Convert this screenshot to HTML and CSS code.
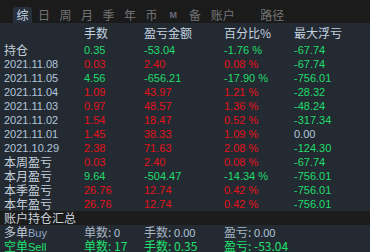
FILE: index.html
```html
<!DOCTYPE html>
<html lang="zh">
<head>
  <meta charset="UTF-8">
  <title>盈亏统计</title>
  <link rel="stylesheet" href="styles.css">
</head>
<body>
  <div class="tabs">
    <span class="tab active">综</span>
    <span class="tab">日</span>
    <span class="tab">周</span>
    <span class="tab">月</span>
    <span class="tab">季</span>
    <span class="tab">年</span>
    <span class="tab">币</span>
    <span class="tab m">M</span>
    <span class="tab">备</span>
    <span class="tab">账户</span>
    <span class="tab path">路径</span>
  </div>

  <div class="table">
    <div class="row head">
      <span></span><span>手数</span><span>盈亏金额</span><span>百分比%</span><span>最大浮亏</span>
    </div>
    <div class="row">
      <span class="label">持仓</span><span class="g">0.35</span><span class="g">-53.04</span><span class="g">-1.76 %</span><span class="g">-67.74</span>
    </div>
    <div class="row">
      <span class="date">2021.11.08</span><span class="r">0.03</span><span class="r">2.40</span><span class="r">0.08 %</span><span class="g">-67.74</span>
    </div>
    <div class="row">
      <span class="date">2021.11.05</span><span class="g">4.56</span><span class="g">-656.21</span><span class="g">-17.90 %</span><span class="g">-756.01</span>
    </div>
    <div class="row">
      <span class="date">2021.11.04</span><span class="r">1.09</span><span class="r">43.97</span><span class="r">1.21 %</span><span class="g">-28.32</span>
    </div>
    <div class="row">
      <span class="date">2021.11.03</span><span class="r">0.97</span><span class="r">48.57</span><span class="r">1.36 %</span><span class="g">-48.24</span>
    </div>
    <div class="row">
      <span class="date">2021.11.02</span><span class="r">1.54</span><span class="r">18.47</span><span class="r">0.52 %</span><span class="g">-317.34</span>
    </div>
    <div class="row">
      <span class="date">2021.11.01</span><span class="r">1.45</span><span class="r">38.33</span><span class="r">1.09 %</span><span class="n">0.00</span>
    </div>
    <div class="row">
      <span class="date">2021.10.29</span><span class="r">2.38</span><span class="r">71.63</span><span class="r">2.08 %</span><span class="g">-124.30</span>
    </div>
    <div class="row">
      <span class="label">本周盈亏</span><span class="r">0.03</span><span class="r">2.40</span><span class="r">0.08 %</span><span class="g">-67.74</span>
    </div>
    <div class="row">
      <span class="label">本月盈亏</span><span class="g">9.64</span><span class="g">-504.47</span><span class="g">-14.34 %</span><span class="g">-756.01</span>
    </div>
    <div class="row">
      <span class="label">本季盈亏</span><span class="r">26.76</span><span class="r">12.74</span><span class="r">0.42 %</span><span class="g">-756.01</span>
    </div>
    <div class="row">
      <span class="label">本年盈亏</span><span class="r">26.76</span><span class="r">12.74</span><span class="r">0.42 %</span><span class="g">-756.01</span>
    </div>
  </div>

  <div class="section">账户持仓汇总</div>

  <div class="table">
    <div class="row sum">
      <span class="label">多单<span class="en">Buy</span></span>
      <span>单数: <span class="n">0</span></span>
      <span>手数: <span class="n">0.00</span></span>
      <span>盈亏: <span class="n">0.00</span></span>
      <span></span>
    </div>
    <div class="row sum sell">
      <span>空单<span class="en">Sell</span></span>
      <span>单数: 17</span>
      <span>手数: 0.35</span>
      <span>盈亏: -53.04</span>
      <span></span>
    </div>
  </div>
</body>
</html>
```

FILE: styles.css
```css
body {
  margin: 0;
  width: 370px;
  height: 252px;
  overflow: hidden;
  background: #232a31;
  font-family: "Liberation Sans", "Noto Sans CJK SC", sans-serif;
  font-size: 11px;
}
.tabs {
  height: 23px;
  background: #1b1b1b;
  display: flex;
  align-items: flex-end;
  padding-left: 13px;
  font-family: "Noto Sans CJK SC", sans-serif;
  font-size: 12px;
  color: #747474;
}
.tab {
  height: 16px;
  line-height: 16px;
  padding: 0 3.5px;
  margin-right: 2.5px;
  border-radius: 3px 3px 0 0;
}
.tab.active {
  background: #28313b;
  color: #cbdcec;
}
.tab.m {
  font-family: "Liberation Sans", sans-serif;
  font-weight: bold;
  font-size: 9px;
  color: #6c6a78;
  padding: 0 6px;
}
.tab.path {
  margin-left: 16px;
}
.table {
  padding-left: 4px;
}
.row {
  display: grid;
  grid-template-columns: 80px 60px 80px 70px 1fr;
  height: 14px;
  line-height: 14px;
  white-space: nowrap;
}
.row.head {
  height: 20px;
  line-height: 20px;
  color: #c4d2e0;
  font-family: "Noto Sans CJK SC", sans-serif;
  font-size: 12px;
}
.label {
  color: #c4d0dc;
  font-family: "Noto Sans CJK SC", sans-serif;
  font-size: 12px;
}
.date {
  color: #b2c6dc;
}
.r {
  color: #e4121c;
}
.g {
  color: #20dc6c;
}
.n {
  color: #b2c6dc;
}
.section {
  height: 14px;
  line-height: 14px;
  background: #1c1c1c;
  color: #c8d2dc;
  padding-left: 4px;
  font-family: "Noto Sans CJK SC", sans-serif;
  font-size: 12px;
}
.row.sum {
  font-family: "Noto Sans CJK SC", sans-serif;
  font-size: 12px;
  color: #a8b6c4;
}
.row.sum .n {
  font-family: "Liberation Sans", sans-serif;
  font-size: 11px;
}
.en {
  font-family: "Liberation Sans", sans-serif;
  font-size: 11px;
  color: #90a8cc;
}
.row.sell,
.row.sell .en {
  color: #20e070;
}
```
